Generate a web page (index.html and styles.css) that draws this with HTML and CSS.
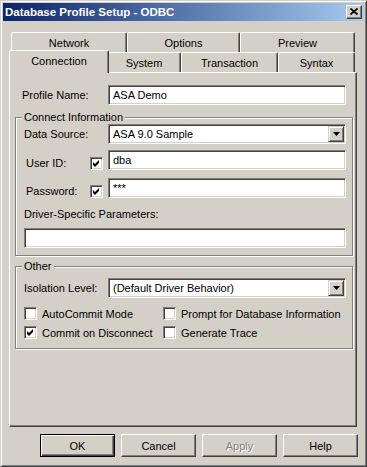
FILE: index.html
```html
<!DOCTYPE html>
<html>
<head>
<meta charset="utf-8">
<title>Database Profile Setup - ODBC</title>
<link rel="stylesheet" href="styles.css">
</head>
<body>
<div class="window">
  <div class="titlebar">
    <span class="title">Database Profile Setup - ODBC</span>
    <div class="tb-close"><svg width="8" height="7" viewBox="0 0 8 7"><path d="M0.5 0.5 L7.5 6.5 M7.5 0.5 L0.5 6.5" stroke="#000" stroke-width="1.7" fill="none"/></svg></div>
  </div>

  <div class="tabs">
    <div class="tabrow">
      <div class="tab t-network">Network</div>
      <div class="tab t-options">Options</div>
      <div class="tab t-preview">Preview</div>
    </div>
    <div class="tabrow">
      <div class="tab sel t-connection">Connection</div>
      <div class="tab t-system">System</div>
      <div class="tab t-transaction">Transaction</div>
      <div class="tab t-syntax">Syntax</div>
    </div>

    <div class="panel">
      <div class="row profile">
        <span class="lbl lbl-profile">Profile Name:</span>
        <div class="edit">ASA Demo</div>
      </div>

      <fieldset class="group g-connect">
        <legend>Connect Information</legend>
        <div class="row">
          <span class="lbl lbl-wide">Data Source:</span>
          <div class="combo"><span class="combo-text">ASA 9.0 Sample</span><span class="combo-btn"><svg width="7" height="4" viewBox="0 0 7 4"><path d="M0 0 H7 L3.5 4 Z" fill="#000"/></svg></span></div>
        </div>
        <div class="row r-user">
          <span class="lbl lbl-chk shift">User ID:</span>
          <span class="chk shift"><svg width="9" height="9" viewBox="0 0 9 9"><path d="M1 3 L3 5 L7 1 L7 4 L3 8 L1 6 Z" fill="#000"/></svg></span>
          <div class="edit">dba</div>
        </div>
        <div class="row r-pass">
          <span class="lbl lbl-chk shift">Password:</span>
          <span class="chk shift"><svg width="9" height="9" viewBox="0 0 9 9"><path d="M1 3 L3 5 L7 1 L7 4 L3 8 L1 6 Z" fill="#000"/></svg></span>
          <div class="edit">***</div>
        </div>
        <div class="lbl-line">Driver-Specific Parameters:</div>
        <div class="edit edit-full"></div>
      </fieldset>

      <fieldset class="group g-other">
        <legend>Other</legend>
        <div class="row r-iso">
          <span class="lbl lbl-wide">Isolation Level:</span>
          <div class="combo"><span class="combo-text">(Default Driver Behavior)</span><span class="combo-btn"><svg width="7" height="4" viewBox="0 0 7 4"><path d="M0 0 H7 L3.5 4 Z" fill="#000"/></svg></span></div>
        </div>
        <div class="checks">
          <div class="citem"><span class="chk"></span><span>AutoCommit Mode</span></div>
          <div class="citem"><span class="chk"></span><span>Prompt for Database Information</span></div>
          <div class="citem"><span class="chk"><svg width="9" height="9" viewBox="0 0 9 9"><path d="M1 3 L3 5 L7 1 L7 4 L3 8 L1 6 Z" fill="#000"/></svg></span><span>Commit on Disconnect</span></div>
          <div class="citem"><span class="chk"></span><span>Generate Trace</span></div>
        </div>
      </fieldset>
    </div>
  </div>

  <div class="buttons">
    <div class="btn default">OK</div>
    <div class="btn">Cancel</div>
    <div class="btn disabled">Apply</div>
    <div class="btn">Help</div>
  </div>
</div>
</body>
</html>
```

FILE: styles.css
```css
html, body {
  margin: 0;
  padding: 0;
  background: #d4d0c8;
}
body {
  font-family: "Liberation Sans", Arial, sans-serif;
  font-size: 11px;
  color: #000;
}
.window {
  width: 367px;
  height: 467px;
  box-sizing: border-box;
  background: #d4d0c8;
  border: 1px solid;
  border-color: #d4d0c8 #404040 #404040 #d4d0c8;
  box-shadow: inset 1px 1px #fff, inset -1px -1px #808080;
  padding: 2px;
}
.titlebar {
  height: 18px;
  display: flex;
  align-items: center;
  padding: 0 2px;
  background: linear-gradient(to right, #0a246a, #a6caf0);
}
.title {
  color: #fff;
  font-weight: bold;
  font-size: 11.5px;
  white-space: nowrap;
}
.tb-close {
  margin-left: auto;
  width: 16px;
  height: 14px;
  box-sizing: border-box;
  background: #d4d0c8;
  border: 1px solid;
  border-color: #fff #404040 #404040 #fff;
  box-shadow: inset -1px -1px #808080;
  display: flex;
  align-items: center;
  justify-content: center;
  padding-bottom: 1px;
}
.tb-close svg { display: block; }

.tabs {
  margin: 11px 0 0 6px;
  width: 348px;
}
.tabrow {
  display: flex;
  height: 20px;
  padding: 0 2px;
}
.tab {
  box-sizing: border-box;
  height: 20px;
  background: #d4d0c8;
  border-top: 1px solid #fff;
  border-left: 1px solid #fff;
  border-right: 1px solid #404040;
  border-radius: 2px 2px 0 0;
  box-shadow: inset -1px 0 #808080;
  display: flex;
  align-items: center;
  justify-content: center;
  white-space: nowrap;
  padding-top: 1px;
}
.t-network { width: 116px; }
.t-options { width: 113px; }
.t-preview { width: 115px; }
.t-connection { width: 96px; }
.t-system { width: 74px; }
.t-transaction { width: 97px; }
.t-syntax { width: 77px; }
.tab.sel {
  position: relative;
  z-index: 1;
  height: 23px;
  margin: -2px -2px 0 -2px;
  width: 100px;
  padding-top: 0;
  padding-bottom: 3px;
  align-self: flex-start;
}

.panel {
  width: 348px;
  height: 355px;
  box-sizing: border-box;
  border: 1px solid;
  border-color: #fff #404040 #404040 #fff;
  box-shadow: inset -1px -1px #808080;
  padding: 12px 3px 0 5px;
}
.row {
  display: flex;
  align-items: center;
  height: 20px;
}
.row.profile { padding-left: 7px; }
.lbl { white-space: nowrap; flex: none; }
.lbl-profile { width: 86px; }
.lbl-wide { width: 84px; }
.lbl-chk { width: 64px; padding-left: 2px; }
.shift { margin-top: 6px; }

.edit {
  box-sizing: border-box;
  width: 238px;
  height: 20px;
  background: #fff;
  border: 1px solid;
  border-color: #808080 #fff #fff #808080;
  box-shadow: inset 1px 1px #404040, inset -1px -1px #d4d0c8;
  padding: 0 4px;
  display: flex;
  align-items: center;
  flex: none;
}
.edit-full { width: 322px; margin-top: 7px; }

.combo {
  box-sizing: border-box;
  width: 238px;
  height: 20px;
  background: #fff;
  border: 1px solid;
  border-color: #808080 #fff #fff #808080;
  box-shadow: inset 1px 1px #404040, inset -1px -1px #d4d0c8;
  padding: 1px 1px 1px 1px;
  display: flex;
  align-items: stretch;
  flex: none;
}
.combo-text {
  flex: 1;
  display: flex;
  align-items: center;
  padding-left: 3px;
  white-space: nowrap;
}
.combo-btn {
  width: 16px;
  box-sizing: border-box;
  background: #d4d0c8;
  border: 1px solid;
  border-color: #d4d0c8 #404040 #404040 #d4d0c8;
  box-shadow: inset 1px 1px #fff, inset -1px -1px #808080;
  display: flex;
  align-items: center;
  justify-content: center;
}
.combo-btn svg { display: block; }

.group {
  box-sizing: border-box;
  width: 338px;
  min-width: 0;
  margin: 6px 0 0 0;
  padding: 0 6px 7px 8px;
  border: 1px solid #808080;
  box-shadow: inset 1px 1px #fff, 1px 1px #fff;
}
.group legend {
  padding: 0 2px;
  margin-left: -2px;
  line-height: 13px;
  background: #d4d0c8;
}
.g-other { margin-top: 4px; padding-bottom: 6px; }
.r-user { margin-top: 6px; }
.r-pass { margin-top: 8px; }
.r-iso { margin-top: 5px; }
.lbl-line {
  margin-top: 10px;
  height: 13px;
  line-height: 13px;
  white-space: nowrap;
}

.chk {
  box-sizing: border-box;
  width: 13px;
  height: 13px;
  flex: none;
  background: #fff;
  border: 1px solid;
  border-color: #808080 #fff #fff #808080;
  box-shadow: inset 1px 1px #404040, inset -1px -1px #d4d0c8;
  display: flex;
  align-items: center;
  justify-content: center;
  margin-right: 5px;
}
.chk svg { display: block; }
.checks {
  display: grid;
  grid-template-columns: 139px 1fr;
  grid-auto-rows: 19px;
  margin-top: 6px;
}
.citem {
  display: flex;
  align-items: center;
  white-space: nowrap;
}

.buttons {
  display: flex;
  justify-content: flex-end;
  gap: 6px;
  width: 349px;
  margin: 7px 0 0 6px;
}
.btn {
  box-sizing: border-box;
  width: 75px;
  height: 23px;
  display: flex;
  align-items: center;
  justify-content: center;
  background: #d4d0c8;
  border: 1px solid;
  border-color: #fff #404040 #404040 #fff;
  box-shadow: inset -1px -1px #808080;
}
.btn.default {
  border-color: #000;
  box-shadow: inset 1px 1px #fff, inset -1px -1px #404040, inset -2px -2px #808080;
}
.btn.disabled {
  color: #808080;
  text-shadow: 1px 1px #fff;
}
```
